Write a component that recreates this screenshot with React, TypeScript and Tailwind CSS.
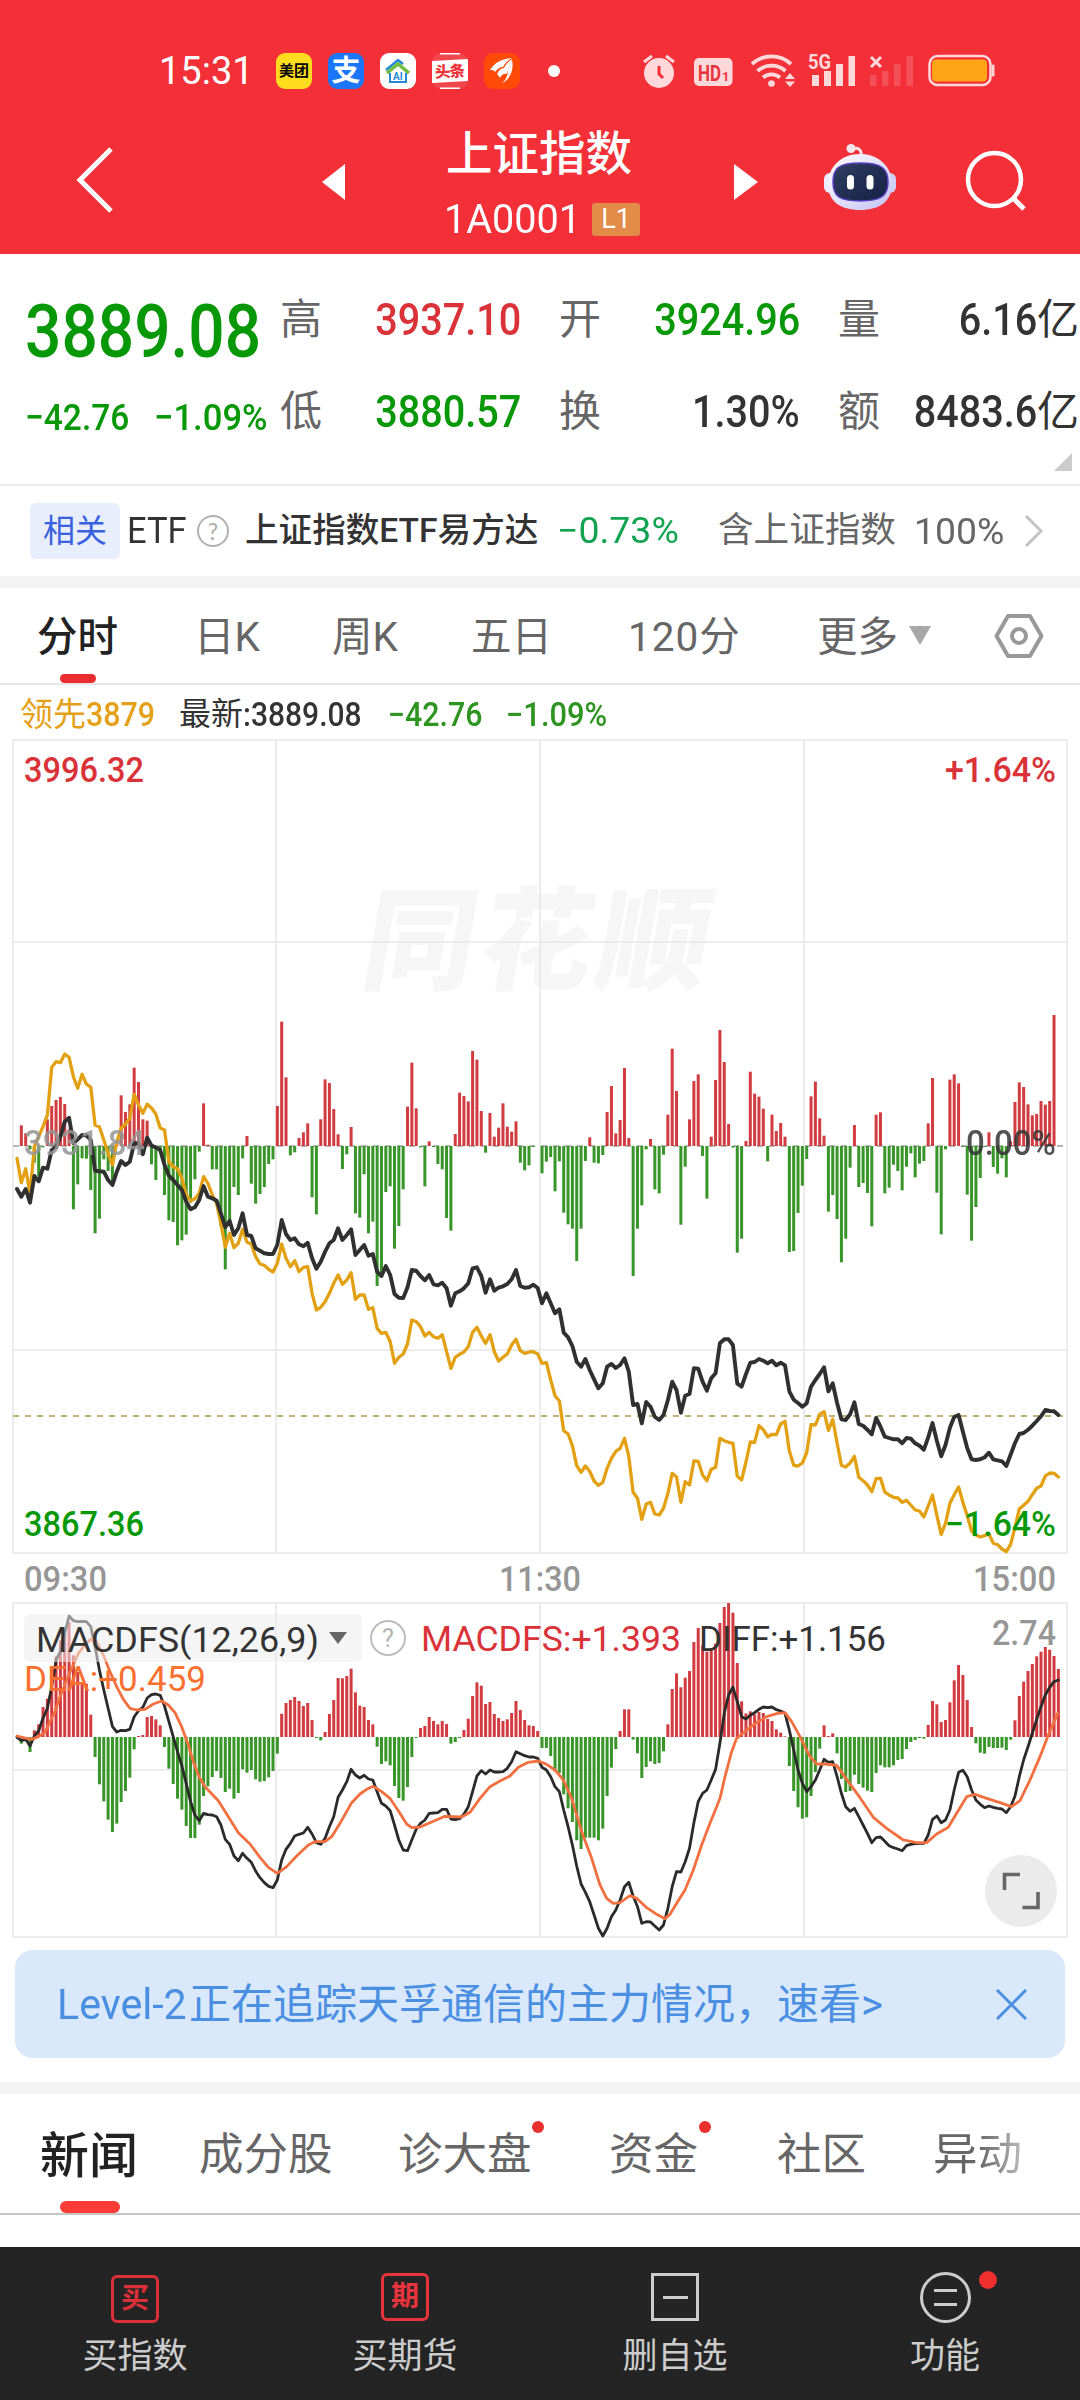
import type { ReactNode } from "react";
import clsx from "clsx";

// Minute samples, measured in thirds of a pixel
const UNIT = 3;
const STEP = 4.339;
const FIRST_X = 17;
const PRICE_MID = 498;
const MACD_ZERO = 471;

const FLOW = [
  0, 62, 38, -10, -50, -90, -4, 80, 120, 138, 147, 126, 50, -190, -115, -37, -38, -132, -262, -218,
  -40, -75, -105, 10, 152, 102, 125, 235, 192, 80, 76, -55, -102, -10, -147, -223, -228, -298, -283, -266,
  -170, -100, -17, 128, 4, -70, -70, -240, -370, -240, -123, -147, -37, 30, -113, -173, -144, -123, -54, -40,
  120, 373, 206, -28, -19, 24, 41, 68, -154, -205, 80, 200, 189, 111, 35, -69, -25, 57, -202, -215,
  -85, -262, -227, -420, -380, -138, -121, -308, -240, -130, 118, 250, 113, -4, -121, 14, -3, -54, -70, -216,
  -254, 36, 160, 150, 134, 285, 259, 105, -20, 99, 28, 55, 128, 58, 43, 74, -50, -73, -58, -3,
  0, -82, -47, -33, -136, -46, -200, -235, -248, -345, -248, -45, 26, -50, -52, -27, 102, 180, 38, 78,
  234, 24, -390, -248, -178, -10, 21, -130, -142, -26, 94, 292, 165, -236, -62, 80, 195, 215, -30, -158,
  28, 198, 348, 252, 66, -5, -320, -278, 15, 223, 157, 148, 112, -46, 94, 45, 69, 28, -318, -315,
  -201, -119, -39, 149, 193, 83, 31, -197, -147, -219, -349, -278, -65, 63, -123, -111, -141, -241, 94, 101,
  -142, -125, -56, -75, -133, -62, -22, -94, -53, -45, 68, 204, -140, -265, -10, 199, 215, 188, -3, -146,
  -284, -183, -96, -3, 41, -63, -83, -37, -94, 14, 132, 191, 177, 125, 92, 96, 135, 124, 135, 393,
  0,
];

const PRICE = [
  627, 650, 627, 668, 588, 604, 563, 566, 510, 500, 470, 425, 413, 490, 478, 465, 466, 480, 572, 574,
  575, 600, 615, 575, 543, 555, 545, 490, 490, 523, 473, 497, 502, 510, 555, 587, 600, 615, 630, 665,
  688, 682, 660, 618, 650, 655, 662, 700, 742, 722, 765, 745, 700, 765, 768, 805, 812, 820, 822, 822,
  795, 720, 762, 780, 775, 793, 799, 788, 835, 866, 845, 815, 790, 780, 745, 780, 765, 748, 825, 810,
  795, 827, 822, 875, 888, 858, 885, 942, 953, 954, 922, 870, 872, 888, 901, 885, 913, 916, 908, 925,
  977, 940, 934, 925, 910, 865, 862, 888, 938, 898, 932, 923, 919, 912, 898, 870, 918, 923, 922, 914,
  924, 970, 940, 970, 1000, 988, 1058, 1072, 1098, 1145, 1160, 1137, 1170, 1198, 1225, 1210, 1160, 1152, 1164, 1155,
  1135, 1175, 1275, 1272, 1330, 1266, 1280, 1310, 1320, 1305, 1260, 1205, 1230, 1298, 1247, 1242, 1165, 1166, 1205, 1232,
  1195, 1180, 1090, 1078, 1078, 1095, 1211, 1220, 1182, 1148, 1146, 1137, 1142, 1150, 1142, 1156, 1148, 1156, 1234, 1259,
  1269, 1280, 1270, 1220, 1200, 1182, 1162, 1234, 1210, 1269, 1318, 1320, 1303, 1267, 1332, 1337, 1349, 1363, 1314, 1340,
  1370, 1374, 1378, 1378, 1390, 1374, 1376, 1390, 1397, 1409, 1372, 1329, 1383, 1429, 1395, 1343, 1311, 1305, 1355, 1404,
  1438, 1440, 1438, 1432, 1418, 1438, 1441, 1444, 1458, 1424, 1389, 1362, 1359, 1349, 1337, 1323, 1309, 1290, 1293, 1294,
  1305,
];

const LEAD = [
  535, 608, 566, 640, 500, 470, 440, 405, 262, 245, 248, 222, 232, 290, 325, 283, 312, 322, 436, 440,
  480, 520, 555, 485, 445, 432, 415, 343, 375, 400, 373, 384, 402, 444, 450, 545, 560, 566, 595, 645,
  662, 656, 640, 590, 610, 645, 670, 730, 802, 760, 803, 790, 748, 787, 792, 830, 852, 856, 868, 876,
  850, 792, 835, 860, 842, 875, 862, 860, 940, 990, 982, 965, 940, 910, 885, 913, 900, 878, 958, 945,
  945, 988, 983, 1045, 1060, 1057, 1085, 1150, 1132, 1122, 1092, 1020, 1025, 1040, 1068, 1057, 1070, 1075, 1064, 1115,
  1165, 1132, 1123, 1116, 1100, 1057, 1042, 1068, 1090, 1064, 1115, 1143, 1132, 1122, 1095, 1078, 1112, 1120, 1116, 1115,
  1122, 1150, 1148, 1200, 1247, 1263, 1352, 1362, 1397, 1457, 1477, 1458, 1474, 1503, 1516, 1507, 1465, 1435, 1414, 1405,
  1375, 1430, 1537, 1555, 1618, 1572, 1567, 1602, 1605, 1585, 1540, 1480, 1490, 1567, 1505, 1515, 1443, 1444, 1485, 1502,
  1468, 1462, 1375, 1382, 1387, 1390, 1489, 1500, 1446, 1386, 1387, 1337, 1349, 1370, 1363, 1364, 1332, 1324, 1412, 1456,
  1458, 1449, 1418, 1334, 1335, 1303, 1295, 1351, 1318, 1389, 1456, 1461, 1449, 1429, 1492, 1502, 1515, 1535, 1496, 1495,
  1536, 1545, 1552, 1554, 1567, 1561, 1575, 1590, 1593, 1611, 1578, 1545, 1607, 1663, 1630, 1570, 1544, 1521, 1567, 1607,
  1653, 1665, 1671, 1667, 1662, 1690, 1694, 1707, 1715, 1693, 1642, 1587, 1576, 1564, 1544, 1525, 1518, 1488, 1479, 1480,
  1491,
];

const MACD = [
  2, -20, -12, -45, 20, 38, 90, 115, 180, 242, 290, 320, 345, 245, 195, 160, 160, 67, -60, -142,
  -193, -248, -285, -260, -195, -162, -122, -37, 3, 6, 60, 63, 53, 35, -30, -95, -141, -185, -218, -267,
  -303, -303, -263, -177, -148, -120, -102, -123, -165, -155, -185, -168, -97, -107, -99, -127, -134, -132, -121, -102,
  -50, 70, 102, 111, 120, 108, 93, 102, 51, -3, -10, 15, 69, 111, 177, 176, 183, 205, 134, 94,
  90, 51, 38, -29, -81, -73, -85, -147, -183, -191, -150, -60, -3, 27, 33, 60, 48, 38, 48, 39,
  -20, -15, -3, 21, 55, 123, 164, 154, 99, 105, 69, 57, 48, 53, 72, 108, 81, 51, 35, 33,
  18, -33, -33, -57, -103, -108, -172, -214, -255, -310, -336, -302, -302, -302, -310, -275, -177, -92, -36, 18,
  83, 83, -8, -49, -123, -90, -73, -81, -78, -43, 38, 144, 191, 149, 178, 198, 285, 327, 275, 256,
  262, 280, 342, 390, 402, 373, 222, 107, 71, 77, 68, 75, 72, 54, 48, 23, 13, 2, -87, -162,
  -211, -245, -241, -177, -105, -35, 35, 3, 11, -49, -126, -165, -162, -113, -141, -152, -161, -165, -108, -85,
  -91, -91, -85, -69, -66, -36, -15, -9, -3, -5, 36, 108, 98, 45, 51, 104, 170, 216, 186, 111,
  30, -19, -47, -50, -30, -33, -33, -32, -39, -8, 50, 123, 166, 198, 219, 242, 256, 270, 262, 243,
  204,
];

const DIFF = [
  472, 482, 478, 498, 468, 452, 415, 385, 320, 240, 215, 160, 108, 122, 125, 124, 125, 140, 200, 270,
  330, 385, 440, 456, 451, 452, 448, 410, 392, 382, 354, 344, 342, 346, 378, 425, 470, 515, 558, 610,
  665, 705, 722, 700, 704, 705, 710, 735, 778, 793, 828, 842, 820, 835, 847, 873, 893, 908, 919, 923,
  900, 840, 808, 790, 768, 763, 759, 742, 762, 788, 793, 775, 740, 710, 652, 630, 605, 568, 585, 594,
  586, 597, 600, 635, 670, 678, 692, 735, 780, 810, 812, 780, 748, 730, 720, 700, 699, 698, 688, 688,
  717, 719, 716, 703, 680, 635, 588, 572, 582, 570, 576, 576, 575, 565, 545, 515, 521, 527, 531, 531,
  535, 562, 570, 590, 620, 635, 690, 740, 795, 858, 912, 937, 965, 1005, 1045, 1068, 1045, 1010, 990, 960,
  920, 907, 948, 980, 1030, 1025, 1026, 1038, 1050, 1035, 985, 920, 875, 876, 845, 805, 728, 665, 640, 630,
  600, 568, 490, 400, 345, 322, 365, 410, 417, 406, 398, 388, 381, 383, 381, 389, 393, 400, 450, 510,
  570, 610, 635, 620, 600, 570, 538, 547, 545, 590, 640, 680, 694, 685, 710, 735, 760, 788, 773, 771,
  784, 797, 803, 807, 812, 797, 793, 791, 790, 790, 765, 718, 708, 728, 720, 690, 630, 577, 571, 590,
  630, 660, 673, 683, 678, 682, 685, 687, 698, 680, 648, 590, 540, 500, 460, 418, 380, 345, 322, 305,
  300,
];

const DEA_POINTS =
  "51,468 70,473 95,478 116,470 135,458 150,425 165,395 180,350 200,300 215,265 235,220 255,195 272,178 290,185 310,225 330,275 350,320 370,358 390,385 410,390 435,388 460,372 485,363 505,375 525,398 545,440 565,495 580,545 597,590 615,620 655,662 685,710 715,758 750,792 780,832 805,862 832,880 860,860 890,828 925,795 945,785 975,785 995,770 1020,730 1055,668 1080,642 1100,628 1120,619 1145,635 1170,655 1195,692 1220,732 1235,743 1260,741 1290,728 1335,709 1385,711 1410,697 1440,655 1470,620 1500,603 1530,588 1555,562 1585,547 1615,543 1640,553 1665,570 1690,600 1715,655 1745,755 1775,835 1800,915 1820,955 1840,970 1860,968 1890,947 1910,955 1940,983 1970,1003 1995,1016 2010,1003 2030,970 2055,930 2080,870 2105,795 2130,730 2150,680 2160,655 2175,590 2195,515 2210,475 2240,450 2270,428 2300,410 2330,401 2355,398 2375,425 2400,470 2430,530 2450,552 2475,552 2510,556 2540,598 2580,653 2620,712 2660,745 2710,780 2750,788 2780,788 2810,762 2845,742 2870,700 2900,650 2925,643 2960,655 3000,668 3035,680 3060,662 3090,600 3120,530 3145,465 3173,400";

const toX = (i: number) => FIRST_X + i * STEP;

function toPoints(values: number[]) {
  return values.map((v, i) => `${toX(i).toFixed(1)},${(v / UNIT).toFixed(1)}`).join(" ");
}

function Bars({ values, zero }: { values: number[]; zero: number }) {
  const y0 = zero / UNIT;
  return (
    <g>
      {values.map((v, i) => {
        const h = Math.abs(v) / UNIT;
        return (
          <rect
            key={i}
            x={toX(i) - 1.5}
            y={v > 0 ? y0 - h : y0}
            width={3}
            height={h}
            fill={v > 0 ? "#d23c41" : "#389628"}
          />
        );
      })}
    </g>
  );
}

interface LabelProps {
  x: number;
  y: number;
  w: number;
  fill: string;
  size?: number;
  weight?: number;
  children: string;
}

// Chart caption stretched to a fixed width; y is the baseline
function Label({ x, y, w, fill, size = 35, weight = 500, children }: LabelProps) {
  return (
    <text x={x} y={y} fontSize={size} fontWeight={weight} fill={fill} textLength={w} lengthAdjust="spacingAndGlyphs">
      {children}
    </text>
  );
}

function Num({ className, children }: { className?: string; children: ReactNode }) {
  return <span className={clsx("inline-block whitespace-nowrap", className)}>{children}</span>;
}

function StatusBar() {
  return (
    <div className="flex h-[38px] items-center text-white">
      <div className="ml-[159px] w-[117px]">
        <Num className="text-[38px]">15:31</Num>
      </div>
      <div className="flex w-[284px] items-center gap-4">
        <div className="flex size-9 items-center justify-center rounded-[9px] bg-[#ffdc1e] text-[15px] font-bold text-black">美团</div>
        <div className="flex size-9 items-center justify-center rounded-[9px] bg-[#1b76fa] text-[29px] font-bold">支</div>
        <div className="flex size-9 items-center justify-center rounded-[9px] bg-white">
          <svg width="30" height="30" viewBox="0 0 30 30" fill="none">
            <path d="M3 14 15 4l5 4" stroke="#2689d8" strokeWidth="2.5" />
            <path d="M4 17 15 8l11 9" stroke="#6fbe3c" strokeWidth="3.5" />
            <path d="M7 17v9h16v-9" stroke="#2689d8" strokeWidth="2" />
            <text x="10" y="24" fontSize="10" fontWeight="700" fill="#2689d8">AI</text>
          </svg>
        </div>
        <svg width="36" height="36" viewBox="0 0 36 36">
          <rect width="36" height="36" rx="9" fill="#f0474c" />
          <path d="M8 .8h20M8 35.200h20" stroke="#fff" strokeWidth="1.600" />
          <path d="m0 8 36-2v22L0 30Z" fill="#fff" />
          <text x="3" y="24" fontSize="15.500" fontWeight="900" fill="#ee3338" textLength="30" transform="rotate(-3 18 18)">头条</text>
        </svg>
        <div className="flex size-9 items-center justify-center rounded-[9px] bg-[#ff4a08]">
          <svg width="28" height="28" viewBox="0 0 28 28" fill="#fff">
            <path d="M2 13C7 5 14 2 24 1c-4 2-7 5-9 9-3 0-6 2-8 5-1-2-3-2-5-2Z" />
            <path d="M9 17c2-4 4-6 7-6 2-4 5-7 8-9-2 5-4 10-5 15-3-1-6 1-7 4-1-2-2-3-3-4Z" />
            <path d="M14 26c4-3 6-8 6-13 1-4 2-7 4-10 2 9-1 19-10 23Z" />
          </svg>
        </div>
        <div className="ml-[12px] size-3 rounded-full bg-white" />
      </div>
      <svg className="ml-[80px]" width="360" height="38" viewBox="640 52 360 38" fill="#ffd9da">
        <circle cx="659" cy="73" r="15" />
        <path d="m644 62 8-6M666 56l8 6" stroke="#ffd9da" strokeWidth="3" />
        <path d="M659 66v8l4 4" stroke="#f32f37" strokeWidth="3" fill="none" />
        <rect x="694" y="58" width="38.500" height="28" rx="5" />
        <text x="698" y="80.500" fontSize="22" fontWeight="700" fill="#e8343c">
          <tspan textLength="23" lengthAdjust="spacingAndGlyphs">HD</tspan>
          <tspan x="722" fontSize="13">1</tspan>
        </text>
        <g fill="none" stroke="#ffd9da" strokeWidth="3.800">
          <path d="M752 64a29 29 0 0 1 39 0" />
          <path d="M757.500 71a21 21 0 0 1 28 0" />
          <path d="M763 77.500a13 13 0 0 1 17 0" />
        </g>
        <circle cx="771.500" cy="83.500" r="3.300" />
        <path d="m785 79 5-6 5 6ZM785 81.500h10l-5 5.500Z" />
        <text x="808" y="69" fontSize="20" fontWeight="700" textLength="23" lengthAdjust="spacingAndGlyphs">5G</text>
        <path d="M812 75h7v11h-7zM824 71h7v15h-7zM836 64h7v22h-7zM848.500 56h6.500v30h-6.500z" />
        <path d="m871 57 10 10M881 57l-10 10" stroke="#ffd9da" strokeWidth="3" />
        <path opacity=".2" d="M870 75h6.500v11H870zM882 71h6.500v15H882zM894 64h6.500v22H894zM906.500 56h6.500v30h-6.500z" />
        <rect x="929.500" y="56" width="61" height="29" rx="8" fill="none" stroke="#ffd9da" strokeWidth="2.500" />
        <rect x="932" y="59.500" width="55" height="22" rx="4" fill="#ffa317" />
        <path d="M992.500 65h1.500v11h-1.500z" stroke="#ffd9da" strokeWidth="1" />
      </svg>
    </div>
  );
}

function Robot() {
  return (
    <svg width="74" height="68" viewBox="0 0 74 68">
      <defs>
        <linearGradient id="shell" x1="0" y1="0" x2="1" y2="1">
          <stop offset="0" stopColor="#ffffff" />
          <stop offset=".6" stopColor="#dcdcfa" />
          <stop offset="1" stopColor="#c3c0f0" />
        </linearGradient>
        <linearGradient id="visor" x1="0" y1="0" x2="1" y2="1">
          <stop offset="0" stopColor="#303f62" />
          <stop offset="1" stopColor="#152044" />
        </linearGradient>
      </defs>
      <circle cx="27" cy="4.500" r="4.500" fill="#f3e6ee" />
      <path d="M28 5c6-2 9 0 9.500 6" fill="none" stroke="#f6dfe5" strokeWidth="3" />
      <rect x="0" y="29" width="12" height="20" rx="6" fill="#eceaff" />
      <rect x="60" y="29" width="12" height="20" rx="6" fill="#d2cff6" />
      <path d="M36 10C55 10 68 23 68 40S56 66 36 66 4 57 4 40 17 10 36 10Z" fill="url(#shell)" />
      <path
        d="M36 19C57 19 64 24 64 38S57 57 36 57 9 52 9 38 15 19 36 19Z"
        fill="url(#visor)"
        stroke="#5a3fc4"
        strokeWidth="1.500"
      />
      <rect x="23" y="31" width="7" height="14.500" rx="3.500" fill="#fff" />
      <rect x="42.500" y="31" width="7" height="14.500" rx="3.500" fill="#fff" />
    </svg>
  );
}

function NavBar() {
  return (
    <div className="flex h-[163px] items-start text-white">
      <svg className="mt-[56px] ml-[75px]" width="40" height="68" viewBox="0 0 40 68" fill="none" stroke="#fff" strokeWidth="5">
        <path d="M36 3 5 34l31 31" />
      </svg>
      <svg className="mt-[74px] ml-[207px]" width="24" height="36" viewBox="0 0 24 36" fill="#fff">
        <path d="M23 0v36L0 18Z" />
      </svg>
      <div className="ml-[98px] flex w-[196px] flex-col pt-[41px]">
        <span className="ml-[2px] text-[46.500px] font-medium whitespace-nowrap">上证指数</span>
        <div className="mt-[21px] flex items-center">
          <div className="w-[148px]">
            <Num className="origin-left scale-x-[0.965] text-[41px]">1A0001</Num>
          </div>
          <div className="flex h-[33px] w-[48px] items-center justify-center rounded-[3px] bg-[#e38b48] text-[27px]">L1</div>
        </div>
      </div>
      <svg className="mt-[74px] ml-[94px]" width="24" height="36" viewBox="0 0 24 36" fill="#fff">
        <path d="M0 0v36l24-18Z" />
      </svg>
      <div className="mt-[54px] ml-[66px]">
        <Robot />
      </div>
      <svg className="mt-[60px] ml-[67px]" width="62" height="62" viewBox="0 0 62 62" fill="none" stroke="#fff" strokeWidth="4.500">
        <circle cx="29.500" cy="29.500" r="26.500" />
        <path d="m48 48 11 11" strokeWidth="5" />
      </svg>
    </div>
  );
}

interface StatProps {
  label: string;
  value: string;
  suffix?: string;
  color?: string;
}

function Stat({ label, value, suffix, color = "text-[#333333]" }: StatProps) {
  return (
    <div className="flex h-[44px] items-center justify-between">
      <span className="text-[42px] text-[#666666]">{label}</span>
      <span className={clsx("flex items-center text-[44px] font-medium", color)}>
        <Num className="origin-right scale-x-[0.9]">{value}</Num>
        {suffix && <span className="text-[42px] font-normal">{suffix}</span>}
      </span>
    </div>
  );
}

function Quote() {
  return (
    <div className="flex h-[232px] border-b-2 border-[#ececec]">
      <div className="w-[280px] pt-[41px] pl-[25px] font-medium text-[#069806]">
        <Num className="origin-left scale-x-[0.865] text-[74px]">3889.08</Num>
        <div className="mt-[30px] flex text-[37px]">
          <div className="w-[129px]">
            <Num className="origin-left scale-x-[0.905]">−42.76</Num>
          </div>
          <Num className="origin-left scale-x-[0.935]">−1.09%</Num>
        </div>
      </div>
      <div className="relative grid w-[800px] grid-cols-[241px_241px_241px] content-start gap-x-[38px] gap-y-[48px] pt-[44px]">
        <Stat label="高" value="3937.10" color="text-[#d93238]" />
        <Stat label="开" value="3924.96" color="text-[#069806]" />
        <Stat label="量" value="6.16" suffix="亿" />
        <Stat label="低" value="3880.57" color="text-[#069806]" />
        <Stat label="换" value="1.30%" />
        <Stat label="额" value="8483.6" suffix="亿" />
        <svg className="absolute right-2 bottom-[13px]" width="18" height="18" viewBox="0 0 18 18" fill="#cccccc">
          <path d="M18 0v18H0Z" />
        </svg>
      </div>
    </div>
  );
}

function RelatedEtf() {
  return (
    <div className="flex h-[90px] items-center text-[33.600px] text-[#333333]">
      <div className="ml-[30px] flex h-[56px] w-[90px] items-center justify-center rounded-[6px] bg-[#e8eefc] text-[32px] text-[#3a62e0]">相关</div>
      <div className="ml-[7px] w-[70px]">
        <Num className="origin-left scale-x-[0.96] text-[36px]">ETF</Num>
      </div>
      <div className="flex size-8 items-center justify-center rounded-full border-2 border-[#b0b0b0] font-[Lato] text-[23px] text-[#aaaaaa]">?</div>
      <div className="ml-[16px] w-[312px] font-medium whitespace-nowrap">上证指数ETF易方达</div>
      <div className="w-[161px]">
        <Num className="origin-left scale-x-[1.04] text-[36px] text-[#12a352]">−0.73%</Num>
      </div>
      <div className="w-[196px] text-[35.600px] text-[#666666]">含上证指数</div>
      <div className="w-[109px]">
        <Num className="origin-left scale-x-[1.01] text-[37px] text-[#666666]">100%</Num>
      </div>
      <svg width="22" height="34" viewBox="0 0 22 34" fill="none" stroke="#c4c4c4" strokeWidth="3">
        <path d="m3 2 15 15L3 32" />
      </svg>
    </div>
  );
}

function PeriodTabs() {
  return (
    <div className="flex h-[97px] items-center border-b-2 border-[#e6e6e6] text-[40.500px] text-[#666666]">
      <div className="relative ml-[37px] flex h-full w-[157px] items-center pt-[3px] font-medium text-[#222222]">
        分时
        <div className="absolute bottom-0 left-[23px] h-[9px] w-9 rounded-full bg-[#e92d30]" />
      </div>
      <div className="w-[138px] pt-[3px]">日K</div>
      <div className="w-[139px] pt-[3px]">周K</div>
      <div className="w-[157px] pt-[3px]">五日</div>
      <div className="w-[189px] pt-[3px] tracking-[1px]">120分</div>
      <div className="w-[91px] pt-[3px]">更多</div>
      <svg width="24" height="19" viewBox="0 0 24 19" fill="#a8a8a8">
        <path d="M1 0h22L12 19Z" />
      </svg>
      <svg className="ml-[62px]" width="50" height="46" viewBox="0 0 50 46" fill="none" stroke="#999999" strokeWidth="4">
        <path d="M14 3h22l11.500 20L36 43H14L2.500 23Z" strokeLinejoin="round" />
        <circle cx="25" cy="23" r="7" />
      </svg>
    </div>
  );
}

function LegendRow() {
  return (
    <div className="flex h-[52px] items-center pt-[6px] text-[33px]">
      <div className="ml-[20px] flex w-[159px] items-center text-[#e5a01a]">
        <span>领先</span>
        <Num className="origin-left scale-x-[0.92] font-medium">3879</Num>
      </div>
      <div className="flex w-[209px] items-center text-[#333333]">
        <span className="text-[32px]">最新</span>
        <Num className="origin-left scale-x-[0.91] font-medium">:3889.08</Num>
      </div>
      <div className="w-[118px] font-medium text-[#2d9420]">
        <Num className="origin-left scale-x-[0.92]">−42.76</Num>
      </div>
      <Num className="origin-left scale-x-[0.935] font-medium text-[#2d9420]">−1.09%</Num>
    </div>
  );
}

function PriceChart() {
  return (
    <svg className="shrink-0" width="1080" height="865" viewBox="0 737 1080 865">
      <text
        x="360"
        y="981"
        fontSize="112"
        fontWeight="900"
        fill="#f6f6f6"
        textLength="346"
        transform="translate(171 0) skewX(-10)"
      >
        同花顺
      </text>
      <g stroke="#e8e8e8" strokeWidth="1.600" fill="none">
        <rect x="13" y="740" width="1054" height="813" />
        <path d="M276 740v813M540 740v813M804 740v813M13 942h1054M13 1350h1054" />
      </g>
      <path d="M13 1146h1054" stroke="#a0a0a0" strokeWidth="1.500" strokeDasharray="6 6" />
      <path d="M13 1416h1054" stroke="#c5b27a" strokeWidth="1.800" strokeDasharray="6 6" />
      <g transform="translate(0 980)">
        <Bars values={FLOW} zero={PRICE_MID} />
        <g fill="none" strokeLinejoin="round" strokeLinecap="round">
          <polyline points={toPoints(LEAD)} stroke="#e2a012" strokeWidth="3.300" />
          <polyline points={toPoints(PRICE)} stroke="#303030" strokeWidth="3.900" />
        </g>
      </g>
      <Label x={24} y={782} w={120} fill="#d93238">3996.32</Label>
      <Label x={945} y={782} w={111} fill="#d93238">+1.64%</Label>
      <Label x={24} y={1536} w={120} fill="#069806">3867.36</Label>
      <Label x={945} y={1536} w={111} fill="#069806">−1.64%</Label>
      <g opacity=".85">
        <Label x={24} y={1155} w={121} fill="#969696">3931.84</Label>
        <Label x={966} y={1155} w={90} fill="#333333">0.00%</Label>
      </g>
      <Label x={24} y={1591} w={83} fill="#969696">09:30</Label>
      <Label x={499} y={1591} w={82} fill="#969696">11:30</Label>
      <Label x={973} y={1591} w={83} fill="#969696">15:00</Label>
    </svg>
  );
}

function MacdChart() {
  return (
    <div className="relative h-[338px] shrink-0">
      <svg width="1080" height="338" viewBox="0 1602 1080 338">
        <g stroke="#e8e8e8" strokeWidth="1.600" fill="none">
          <rect x="13" y="1603" width="1054" height="334" />
          <path d="M276 1603v334M540 1603v334M804 1603v334M13 1770h1054" />
        </g>
        <g transform="translate(0 1580)">
          <Bars values={MACD} zero={MACD_ZERO} />
          <g fill="none" strokeLinejoin="round" strokeLinecap="round">
            <polyline points={toPoints(DIFF)} stroke="#2a2a2a" strokeWidth="2.800" />
            <polyline points={DEA_POINTS} transform="scale(0.33333)" stroke="#f2703f" strokeWidth="8.400" />
          </g>
        </g>
        <rect x="24" y="1614" width="338" height="48" rx="6" fill="#ececec" opacity=".55" />
        <Label x={36} y={1652} w={283} fill="#333333" weight={400}>MACDFS(12,26,9)</Label>
        <path d="M329 1632h18l-9 12Z" fill="#666666" />
        <circle cx="388" cy="1638" r="17" fill="none" stroke="#bcbcbc" strokeWidth="2" />
        <text x="388" y="1647" textAnchor="middle" fontSize="25" fill="#b5b5b5">?</text>
        <Label x={421} y={1651} w={260} fill="#d93238" weight={400}>MACDFS:+1.393</Label>
        <Label x={699} y={1651} w={187} fill="#333333" weight={400}>DIFF:+1.156</Label>
        <Label x={992} y={1645} w={64} fill="#969696">2.74</Label>
        <Label x={24} y={1691} w={182} fill="#f97030" weight={400}>DEA:+0.459</Label>
      </svg>
      <div className="absolute right-[23px] bottom-[13px] flex size-[72px] items-center justify-center rounded-full bg-[#ebebeb]">
        <svg width="38" height="38" viewBox="0 0 38 38" fill="none" stroke="#666666" strokeWidth="3.600">
          <path d="M2.500 18V2.500H18M36 20v15.500H20.500" />
        </svg>
      </div>
    </div>
  );
}

function Banner() {
  return (
    <div className="mx-[15px] mt-[10px] flex h-[108px] shrink-0 items-center rounded-[18px] bg-[#d9e8fb] text-[#4a8fe2]">
      <div className="ml-[42px] flex w-[939px] items-center pt-[2px] text-[42px] whitespace-nowrap">
        <div className="w-[132px]">
          <Num className="origin-left scale-x-[0.98]">Level-2</Num>
        </div>
        正在追踪天孚通信的主力情况，速看&gt;
      </div>
      <svg width="31" height="31" viewBox="0 0 31 31" stroke="#4a8fe2" strokeWidth="3">
        <path d="m1 1 29 29M30 1 1 30" />
      </svg>
    </div>
  );
}

function NewsTabs() {
  return (
    <div className="flex h-[121px] shrink-0 items-center border-b-2 border-[#c6c6c6] text-[44.500px] text-[#666666]">
      <div className="relative ml-[40px] flex h-full w-[159px] items-center pt-[5px] text-[49px] font-medium text-[#222222]">
        新闻
        <div className="absolute bottom-0 left-[20px] h-3 w-[60px] rounded-full bg-[#fb3b35]" />
      </div>
      <div className="w-[199px] pt-[4px]">成分股</div>
      <div className="relative w-[211px] pt-[4px]">
        诊大盘
        <div className="absolute -top-[8px] left-[134px] size-3 rounded-full bg-[#e8302f]" />
      </div>
      <div className="relative w-[168px] pt-[4px]">
        资金
        <div className="absolute -top-[8px] left-[90px] size-3 rounded-full bg-[#e8302f]" />
      </div>
      <div className="w-[156px] pt-[4px]">社区</div>
      <div className="bg-linear-to-r from-[#666666] from-50% to-[#bbbbbb] bg-clip-text pt-[4px] text-transparent">异动</div>
    </div>
  );
}

function BottomItem({ icon, label }: { icon: ReactNode; label: string }) {
  return (
    <div className="flex w-[270px] flex-col items-center pt-[25px] text-[35px] text-[#cccccc]">
      <div className="relative flex h-[50px] items-center">{icon}</div>
      <span className="mt-[17px]">{label}</span>
    </div>
  );
}

function BottomBar() {
  return (
    <div className="mt-auto flex h-[153px] shrink-0 bg-[#242424]">
      <BottomItem
        label="买指数"
        icon={<div className="mt-[3px] flex size-12 items-center justify-center rounded-[6px] border-[3px] border-[#dc3038] text-[28px] font-bold text-[#dc3038]">买</div>}
      />
      <BottomItem
        label="买期货"
        icon={<div className="flex size-12 items-center justify-center rounded-[6px] border-[3px] border-[#e8343c] text-[28px] font-bold text-[#e8343c]">期</div>}
      />
      <BottomItem
        label="删自选"
        icon={
          <div className="flex size-12 items-center justify-center border-[3px] border-[#cccccc]">
            <div className="h-[3px] w-[25px] bg-[#cccccc]" />
          </div>
        }
      />
      <BottomItem
        label="功能"
        icon={
          <>
            <div className="flex size-[51px] flex-col items-center justify-center gap-[11px] rounded-full border-[3px] border-[#cccccc]">
              <div className="h-[3px] w-[23px] bg-[#cccccc]" />
              <div className="h-[3px] w-[23px] bg-[#cccccc]" />
            </div>
            <div className="absolute -top-[1px] left-[59px] size-[18px] rounded-full bg-[#f0302f]" />
          </>
        }
      />
    </div>
  );
}

export default function App() {
  return (
    <div className="flex h-[2400px] w-[1080px] flex-col overflow-hidden bg-white font-[Roboto,'Noto_Sans_CJK_SC',sans-serif] leading-none">
      <div className="h-[254px] shrink-0 bg-[#f32f37] pt-[52px]">
        <StatusBar />
        <NavBar />
      </div>
      <Quote />
      <RelatedEtf />
      <div className="h-3 shrink-0 bg-[#f3f3f3]" />
      <PeriodTabs />
      <LegendRow />
      <PriceChart />
      <MacdChart />
      <Banner />
      <div className="mt-6 h-3 shrink-0 bg-[#f3f3f3]" />
      <NewsTabs />
      <BottomBar />
    </div>
  );
}
